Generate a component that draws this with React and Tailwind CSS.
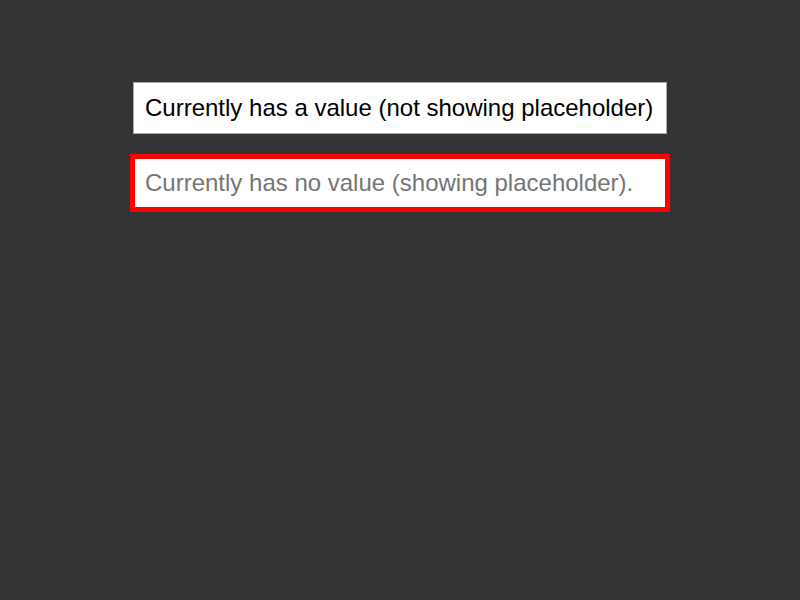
export default function App() {
  return (
    <div className="min-h-screen bg-[#333333] flex flex-col items-center pt-[82px] gap-[23px]" style={{}}>
      <input
        type="text"
        readOnly
        value="Currently has a value (not showing placeholder)"
        className="w-[534px] h-[52px] bg-white border border-[#a9a9a9] px-[11px] text-[24px] text-black font-['Liberation_Sans',Arial,sans-serif] outline-none"
      />
      <input
        type="text"
        readOnly
        placeholder="Currently has no value (showing placeholder)."
        className="w-[534px] h-[52px] bg-white border-2 border-[#ff0000] outline-[3px] outline-solid outline-[#ff0000] px-[10px] text-[24px] text-black placeholder:text-[#757575] font-['Liberation_Sans',Arial,sans-serif]"
      />
    </div>
  );
}
